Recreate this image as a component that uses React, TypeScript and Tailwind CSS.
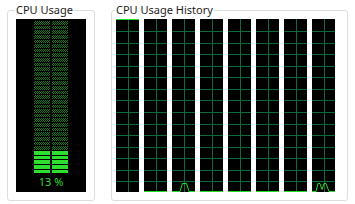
import React from 'react';

const font = { fontFamily: '"Noto Sans", "Open Sans", Arial, sans-serif' };

// y positions (local px) of the horizontal grid lines in each history graph
const gridRows = [12, 24, 35, 47, 58, 70, 81, 93, 105, 116, 128, 139, 151, 162];

const B = 172.5; // baseline of the usage line
const histories: string[] = [
  '0,0.5 23,0.5',
  `0,${B} 23,${B}`,
  `0,${B} 8,${B} 10.5,164.5 14.5,164.5 17,${B} 23,${B}`,
  `0,${B} 23,${B}`,
  `0,${B} 23,${B}`,
  `0,${B} 23,${B}`,
  `0,${B} 23,${B}`,
  `0,${B} 4,${B} 6,164.5 8,164.5 10,170.5 12,164.5 14,164.5 17,${B} 23,${B}`,
];

const HistoryGraph: React.FC<{ points: string }> = ({ points }) => (
  <svg width="23" height="173" className="block bg-black shrink-0">
    {gridRows.map((y) => (
      <line key={y} x1="0" x2="23" y1={y + 0.5} y2={y + 0.5} stroke="#0b6b3a" strokeWidth="1" />
    ))}
    <line x1="12.5" x2="12.5" y1="0" y2="173" stroke="#0b6b3a" strokeWidth="1" />
    <polyline points={points} fill="none" stroke="#22dd22" strokeWidth="1" />
  </svg>
);

const TOTAL_ROWS = 33;
const LIT_ROWS = 5;

const UsageMeter: React.FC = () => (
  <div className="flex flex-col items-center h-[173px] bg-black">
    <div className="flex gap-[2px] mt-[2px] h-[152px]">
      {[0, 1].map((col) => (
        <div key={col} className="flex flex-col gap-[1px] w-[16px]">
          {Array.from({ length: TOTAL_ROWS }).map((_, i) =>
            i >= TOTAL_ROWS - LIT_ROWS ? (
              <div key={i} className="flex-1 bg-[#2ee02e]" />
            ) : (
              <div
                key={i}
                className="flex-1 bg-[conic-gradient(#167a16_25%,transparent_0_50%,#167a16_0_75%,transparent_0)] bg-[length:2px_2px]"
              />
            )
          )}
        </div>
      ))}
    </div>
    <div className="mt-[2px] text-[11px] leading-[14px] text-[#2ed82e]" style={font}>
      13 %
    </div>
  </div>
);

export default function App() {
  return (
    <div className="w-[355px] h-[204px] bg-white flex gap-[16px] pl-[7px] pt-[2px]" style={font}>
      <fieldset className="w-[88px] h-[199px] border border-[#d9dfe3] rounded-[3px] px-[8px]">
        <legend className="-ml-[1px] px-[1px] text-[11px] leading-[16px] text-[#1e1e1e]">CPU Usage</legend>
        <div className="mt-[1px]">
          <UsageMeter />
        </div>
      </fieldset>
      <fieldset className="w-[237px] h-[199px] border border-[#d9dfe3] rounded-[3px] pl-[4px] pr-[11px]">
        <legend className="-ml-[1px] px-[1px] text-[11px] leading-[16px] text-[#1e1e1e]">CPU Usage History</legend>
        <div className="mt-[1px] flex gap-[5px]">
          {histories.map((p, i) => (
            <HistoryGraph key={i} points={p} />
          ))}
        </div>
      </fieldset>
    </div>
  );
}
